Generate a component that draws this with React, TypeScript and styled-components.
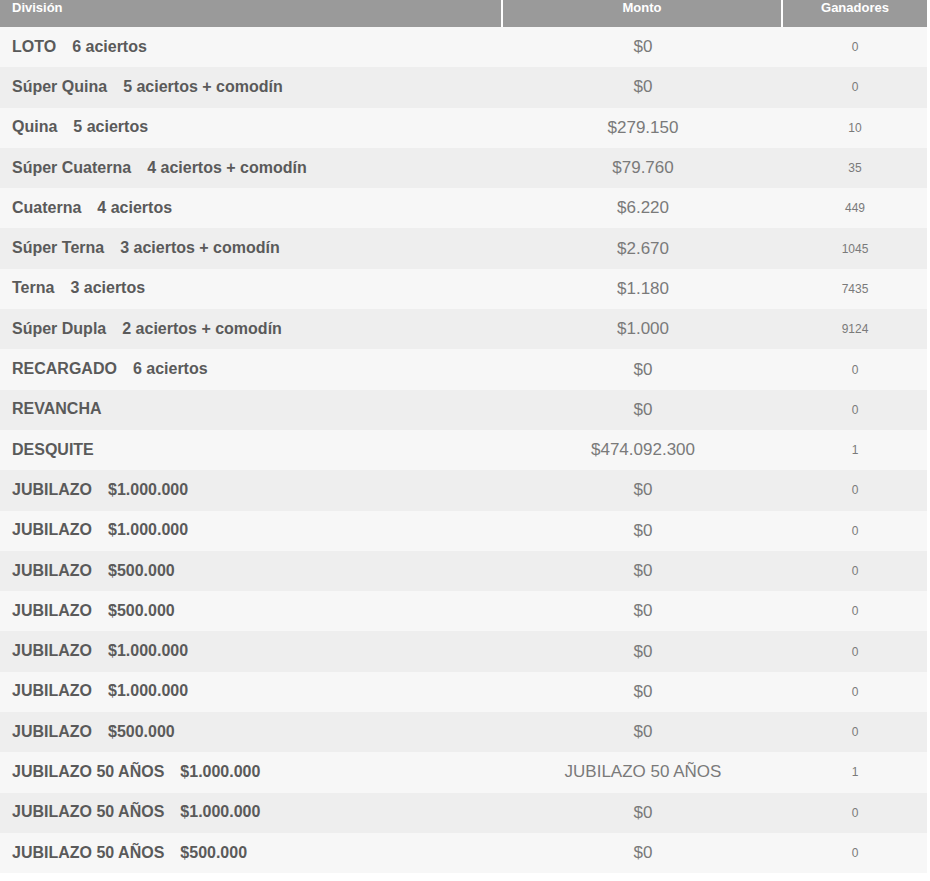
import React from 'react';
import styled, { createGlobalStyle } from 'styled-components';

const GlobalStyle = createGlobalStyle`
  html, body {
    margin: 0;
    padding: 0;
    background: #ffffff;
  }

  body {
    font-family: 'Liberation Sans', Arial, sans-serif;
  }
`;

const Table = styled.div`
  width: 927px;
  display: flex;
  flex-direction: column;
`;

const HeaderRow = styled.div`
  display: grid;
  grid-template-columns: 501px 278px 144px;
  column-gap: 2px;
  background: #ffffff;
  height: 27px;
`;

const HeaderCell = styled.div<{ $align?: 'left' | 'center' }>`
  background: #9a9a9a;
  color: #ffffff;
  font-size: 13px;
  font-weight: bold;
  line-height: 15px;
  text-align: ${(p) => p.$align ?? 'center'};
  padding-left: ${(p) => (p.$align === 'left' ? '12px' : '0')};
`;

const Row = styled.div<{ $odd: boolean }>`
  display: grid;
  grid-template-columns: 503px 280px 144px;
  align-items: center;
  height: 40.3px;
  background: ${(p) => (p.$odd ? '#eeeeee' : '#f7f7f7')};
`;

const DivisionCell = styled.div`
  padding-left: 12px;
  font-size: 16px;
  font-weight: bold;
  color: #5a5a5a;
  white-space: nowrap;
  margin-top: -1px;
`;

const Detail = styled.span`
  margin-left: 16px;
`;

const AmountCell = styled.div`
  text-align: center;
  font-size: 17px;
  color: #7a7a7a;
`;

const WinnersCell = styled.div`
  text-align: center;
  font-size: 12px;
  color: #7a7a7a;
`;

type Prize = {
  name: string;
  detail?: string;
  amount: string;
  winners: string;
};

const prizes: Prize[] = [
  { name: 'LOTO', detail: '6 aciertos', amount: '$0', winners: '0' },
  { name: 'Súper Quina', detail: '5 aciertos + comodín', amount: '$0', winners: '0' },
  { name: 'Quina', detail: '5 aciertos', amount: '$279.150', winners: '10' },
  { name: 'Súper Cuaterna', detail: '4 aciertos + comodín', amount: '$79.760', winners: '35' },
  { name: 'Cuaterna', detail: '4 aciertos', amount: '$6.220', winners: '449' },
  { name: 'Súper Terna', detail: '3 aciertos + comodín', amount: '$2.670', winners: '1045' },
  { name: 'Terna', detail: '3 aciertos', amount: '$1.180', winners: '7435' },
  { name: 'Súper Dupla', detail: '2 aciertos + comodín', amount: '$1.000', winners: '9124' },
  { name: 'RECARGADO', detail: '6 aciertos', amount: '$0', winners: '0' },
  { name: 'REVANCHA', amount: '$0', winners: '0' },
  { name: 'DESQUITE', amount: '$474.092.300', winners: '1' },
  { name: 'JUBILAZO', detail: '$1.000.000', amount: '$0', winners: '0' },
  { name: 'JUBILAZO', detail: '$1.000.000', amount: '$0', winners: '0' },
  { name: 'JUBILAZO', detail: '$500.000', amount: '$0', winners: '0' },
  { name: 'JUBILAZO', detail: '$500.000', amount: '$0', winners: '0' },
  { name: 'JUBILAZO', detail: '$1.000.000', amount: '$0', winners: '0' },
  { name: 'JUBILAZO', detail: '$1.000.000', amount: '$0', winners: '0' },
  { name: 'JUBILAZO', detail: '$500.000', amount: '$0', winners: '0' },
  { name: 'JUBILAZO 50 AÑOS', detail: '$1.000.000', amount: 'JUBILAZO 50 AÑOS', winners: '1' },
  { name: 'JUBILAZO 50 AÑOS', detail: '$1.000.000', amount: '$0', winners: '0' },
  { name: 'JUBILAZO 50 AÑOS', detail: '$500.000', amount: '$0', winners: '0' },
];

const App: React.FC = () => {
  return (
    <>
      <GlobalStyle />
      <Table>
        <HeaderRow>
          <HeaderCell $align="left">División</HeaderCell>
          <HeaderCell>Monto</HeaderCell>
          <HeaderCell>Ganadores</HeaderCell>
        </HeaderRow>
        {prizes.map((prize, i) => (
          <Row key={i} $odd={i % 2 === 1}>
            <DivisionCell>
              {prize.name}
              {prize.detail && <Detail>{prize.detail}</Detail>}
            </DivisionCell>
            <AmountCell>{prize.amount}</AmountCell>
            <WinnersCell>{prize.winners}</WinnersCell>
          </Row>
        ))}
      </Table>
    </>
  );
};

export default App;
